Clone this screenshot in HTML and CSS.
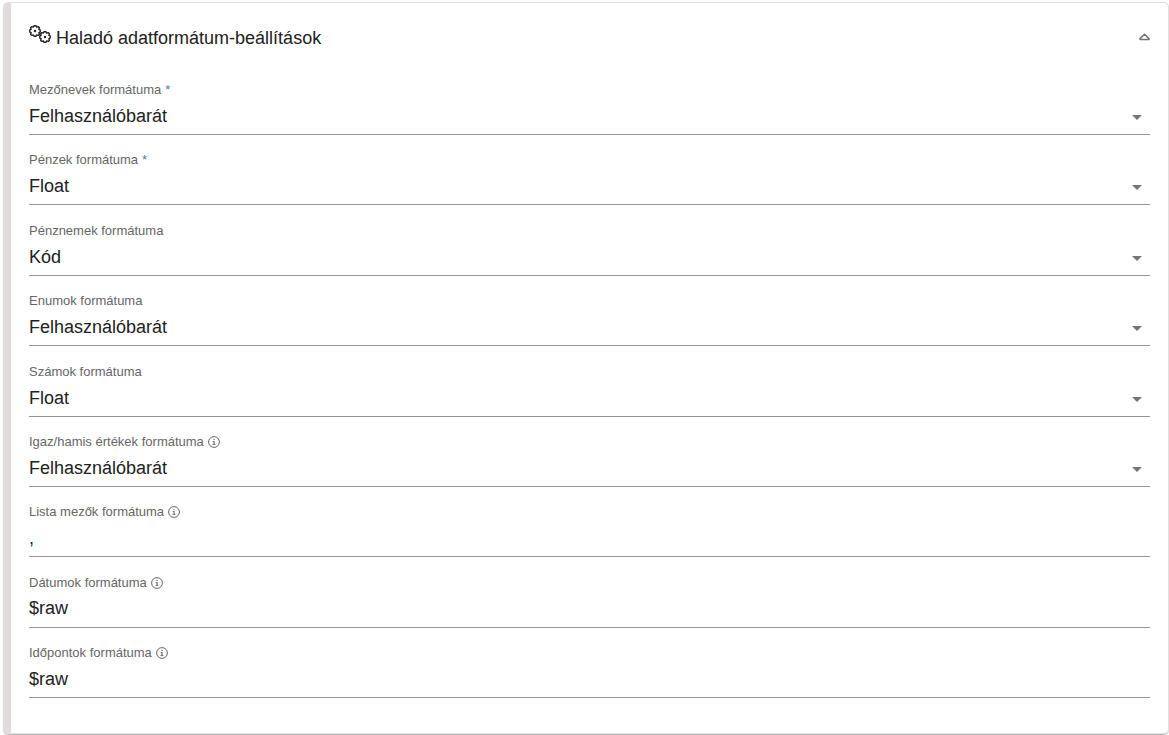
FILE: index.html
```html
<!DOCTYPE html>
<html lang="hu">
<head>
  <meta charset="UTF-8">
  <meta name="viewport" content="width=device-width, initial-scale=1">
  <title>Haladó adatformátum-beállítások</title>
  <link rel="stylesheet" href="styles.css">
</head>
<body>
  <svg class="symbols" aria-hidden="true">
    <symbol id="info" viewBox="0 0 12 12">
      <circle cx="6" cy="6" r="5.4" fill="none" stroke="currentColor" stroke-width="1"/>
      <path d="M5.4 2.9h1.2v1.2H5.4zM4.6 5h2v3.2h.9V9h-3v-.8h1V5.8h-.9z" fill="currentColor"/>
    </symbol>
    <symbol id="gear" viewBox="-6 -6 12 12">
      <path d="M-1.1-5.2h2.2l.6 1.3 1.5-.5 1.2 1.2-.5 1.5 1.3.6v2.2l-1.3.6.5 1.5-1.2 1.2-1.5-.5-.6 1.3h-2.2l-.6-1.3-1.5.5-1.2-1.2.5-1.5-1.3-.6v-2.2l1.3-.6-.5-1.5 1.2-1.2 1.5.5z" fill="none" stroke="currentColor" stroke-width="1.4" stroke-linejoin="round"/>
      <circle r="1.2" fill="currentColor"/>
    </symbol>
  </svg>

  <section class="card">
    <button type="button" class="card-header" id="toggle" aria-expanded="true" aria-controls="settings">
      <svg class="gears" viewBox="0 0 22 18" aria-hidden="true">
        <use href="#gear" x="0" y="0" width="12" height="12"/>
        <use href="#gear" x="10" y="6" width="12" height="12"/>
      </svg>
      <span class="card-title">Haladó adatformátum-beállítások</span>
      <svg class="chevron" viewBox="0 0 12 8" aria-hidden="true">
        <path d="M6.5 1.2L11 5.6v.9H2v-.9z" fill="none" stroke="currentColor" stroke-width="1.6" stroke-linejoin="round"/>
      </svg>
    </button>

    <form class="fields" id="settings">
      <div class="field">
        <label for="fieldNames">Mezőnevek formátuma <span class="required">*</span></label>
        <div class="select">
          <select id="fieldNames" required><option>Felhasználóbarát</option></select>
        </div>
      </div>
      <div class="field">
        <label for="money">Pénzek formátuma <span class="required">*</span></label>
        <div class="select">
          <select id="money" required><option>Float</option></select>
        </div>
      </div>
      <div class="field">
        <label for="currency">Pénznemek formátuma</label>
        <div class="select">
          <select id="currency"><option>Kód</option></select>
        </div>
      </div>
      <div class="field">
        <label for="enums">Enumok formátuma</label>
        <div class="select">
          <select id="enums"><option>Felhasználóbarát</option></select>
        </div>
      </div>
      <div class="field">
        <label for="numbers">Számok formátuma</label>
        <div class="select">
          <select id="numbers"><option>Float</option></select>
        </div>
      </div>
      <div class="field">
        <label for="booleans">Igaz/hamis értékek formátuma <svg class="info"><use href="#info"/></svg></label>
        <div class="select">
          <select id="booleans"><option>Felhasználóbarát</option></select>
        </div>
      </div>
      <div class="field">
        <label for="lists">Lista mezők formátuma <svg class="info"><use href="#info"/></svg></label>
        <input type="text" id="lists" value=",">
      </div>
      <div class="field">
        <label for="dates">Dátumok formátuma <svg class="info"><use href="#info"/></svg></label>
        <input type="text" id="dates" value="$raw">
      </div>
      <div class="field">
        <label for="times">Időpontok formátuma <svg class="info"><use href="#info"/></svg></label>
        <input type="text" id="times" value="$raw">
      </div>
    </form>
  </section>

  <script>
    const toggle = document.getElementById('toggle');
    const settings = document.getElementById('settings');

    toggle.addEventListener('click', function () {
      settings.hidden = !settings.hidden;
      toggle.setAttribute('aria-expanded', String(!settings.hidden));
    });
  </script>
</body>
</html>
```

FILE: styles.css
```css
* {
  box-sizing: border-box;
}
body {
  margin: 0;
  padding: 2px 0 1px 3px;
  min-height: 100vh;
  display: flex;
  flex-direction: column;
  background: #fff;
  color: #212121;
  font-family: "Liberation Sans", Arial, sans-serif;
  font-size: 18px;
}
.symbols {
  position: absolute;
  width: 0;
  height: 0;
}
.card {
  flex: 1;
  display: flex;
  flex-direction: column;
  padding: 18px 18px 35px;
  border: 1px solid #e0e0e0;
  border-left: 8px solid #e0dcdc;
  border-radius: 5px;
  box-shadow: 0 1px 1px rgba(0, 0, 0, 0.3);
}
.card-header {
  display: flex;
  align-items: center;
  gap: 5px;
  width: 100%;
  height: 32px;
  margin-bottom: 29px;
  padding: 0;
  border: none;
  background: none;
  color: inherit;
  font: inherit;
  text-align: left;
  cursor: pointer;
}
.card-title {
  flex: 1;
  padding-top: 2px;
}
.gears {
  width: 22px;
  height: 18px;
  margin-bottom: 6px;
}
.chevron {
  width: 12px;
  height: 8px;
  color: #757575;
}
.card-header[aria-expanded="false"] .chevron {
  transform: rotate(180deg);
}
.fields {
  flex: 1;
  display: flex;
  flex-direction: column;
  justify-content: space-between;
  gap: 16px;
}
.fields[hidden] {
  display: none;
}
.field label {
  display: flex;
  align-items: center;
  gap: 4px;
  color: #666;
  font-size: 13px;
  line-height: 16px;
}
.required {
  color: #5c7a99;
}
.info {
  width: 12px;
  height: 12px;
}
.select {
  position: relative;
}
.select::after {
  content: "";
  position: absolute;
  right: 8px;
  top: 17px;
  border: 5px solid transparent;
  border-top-color: #757575;
  border-bottom: none;
  pointer-events: none;
}
.field select,
.field input {
  display: block;
  width: 100%;
  height: 37px;
  padding: 0;
  border: none;
  border-bottom: 1px solid #949494;
  border-radius: 0;
  outline: none;
  appearance: none;
  background: none;
  color: inherit;
  font: inherit;
}
```
